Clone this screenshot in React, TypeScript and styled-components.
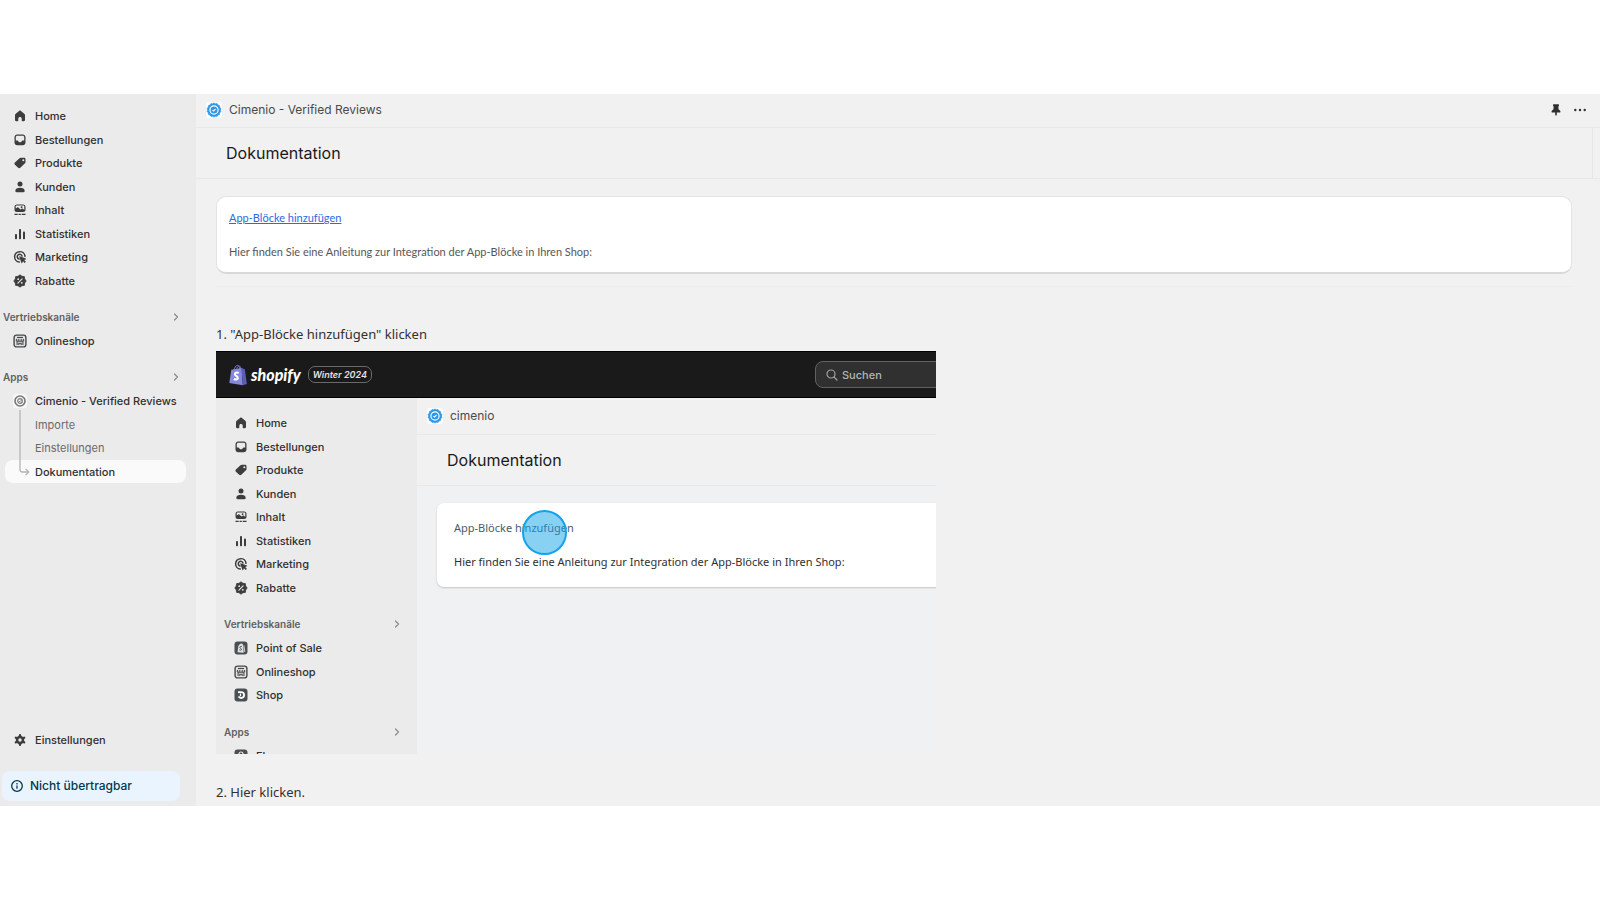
import React from 'react';
import styled, { createGlobalStyle, css } from 'styled-components';

const ui = `Inter, 'Liberation Sans', sans-serif`;
const prose = `'Noto Sans', 'Open Sans', sans-serif`;

const GlobalStyle = createGlobalStyle`
  *, *::before, *::after { box-sizing: border-box; }
  body { margin: 0; background: #ffffff; font-family: ${ui}; color: #303030; }
  h1, h2, h3, p, ul, ol { margin: 0; padding: 0; font-weight: 400; }
  ul, ol { list-style: none; }
  svg { display: block; flex: none; }
`;

/* ---------- icons ---------- */

type IconName =
  | 'home' | 'orders' | 'products' | 'customers' | 'content' | 'analytics'
  | 'marketing' | 'discounts' | 'store' | 'pos' | 'shop' | 'flow' | 'settings' | 'seal';

const scallop = (cx: number, cy: number, r1: number, r2: number, n: number) =>
  Array.from({ length: n * 2 }, (_, i) => {
    const a = (i * Math.PI) / n;
    const r = i % 2 ? r2 : r1;
    return `${(cx + r * Math.sin(a)).toFixed(2)},${(cy - r * Math.cos(a)).toFixed(2)}`;
  }).join(' ');

const glyphs: Record<IconName, React.ReactNode> = {
  home: (
    <path d="M6.1 1.9 2.7 4.7C2.2 5.1 2 5.6 2 6.2v4.9c0 .7.5 1.2 1.2 1.2h1.4c.4 0 .7-.3.7-.7V9.7c0-.9.8-1.6 1.7-1.6s1.7.7 1.7 1.6v1.9c0 .4.3.7.7.7h1.4c.7 0 1.2-.5 1.2-1.2V6.2c0-.6-.2-1.1-.7-1.5L7.9 1.9c-.5-.4-1.3-.4-1.8 0z" />
  ),
  orders: (
    <path fillRule="evenodd" d="M4.2 1.6h5.6c1.5 0 2.7 1.2 2.7 2.7v5.2c0 1.5-1.2 2.7-2.7 2.7H4.2c-1.5 0-2.7-1.2-2.7-2.7V4.3c0-1.5 1.2-2.7 2.7-2.7zM4.3 2.8c-.9 0-1.5.6-1.5 1.5v3.3h1.5c.5 0 .8.2 1 .6.3.7.8 1 1.7 1s1.4-.3 1.7-1c.2-.4.5-.6 1-.6h1.5V4.3c0-.9-.6-1.5-1.5-1.5z" />
  ),
  products: (
    <path fillRule="evenodd" d="M8 1.8h3.1c.8 0 1.4.6 1.4 1.4v2.7c0 .7-.3 1.3-.8 1.7l-4.4 4.1c-.6.6-1.500.6-2.100 0L1.900 8.700c-.6-.6-.6-1.500 0-2.100L6.200 2.500c.5-.5 1.100-.7 1.800-.7zM10.300 3.200a1 1 0 1 0 0 2 1 1 0 0 0 0-2z" />
  ),
  customers: (
    <>
      <circle cx="7" cy="3.900" r="2.500" />
      <path d="M2.300 11c0-2 2-3.200 4.700-3.200s4.700 1.200 4.700 3.200c0 .7-.5 1.200-1.200 1.200h-7c-.7 0-1.200-.5-1.200-1.200z" />
    </>
  ),
  content: (
    <>
      <path fillRule="evenodd" d="M3.800 1.500h6.400c1.300 0 2.300 1 2.300 2.300v3c0 1.300-1 2.300-2.300 2.300H3.800c-1.300 0-2.300-1-2.300-2.300v-3c0-1.300 1-2.300 2.300-2.300zM3.900 2.600c-.7 0-1.200.5-1.200 1.200v1.600l1.500-.9c.4-.2.800-.2 1.100.1L7.500 6.400l1.100-.7c.4-.2.800-.2 1.100 0l1.600 1V3.800c0-.7-.5-1.200-1.200-1.200zM8.600 3.300a.9.9 0 1 0 0 1.800.9.9 0 0 0 0-1.800z" />
      <path d="M1.500 10.800h3.200v1.200H1.500zM5.600 10.800h2.200v1.200H5.600zM8.700 10.800h3.800v1.200H8.700z" />
    </>
  ),
  analytics: (
    <>
      <rect x="2" y="7" width="2" height="5.200" rx=".8" />
      <rect x="6" y="2" width="2" height="10.200" rx=".8" />
      <rect x="10" y="4.500" width="2" height="7.700" rx=".8" />
    </>
  ),
  marketing: (
    <>
      <g fill="none" stroke="currentColor" strokeWidth="1.500" strokeLinecap="round">
        <path d="M12 6.300A5.200 5.200 0 1 0 6.300 12" />
        <path d="M9 6.100A2.400 2.400 0 1 0 6 9" />
      </g>
      <path d="m6.600 6.300 6.300 2.100c.4.1.4.6 0 .8l-1.700.8 1.700 1.700-1.200 1.200L10 11.200l-.8 1.700c-.2.400-.7.400-.8 0L6.300 6.700c-.1-.3.100-.5.300-.4z" />
    </>
  ),
  discounts: (
    <>
      <polygon points={scallop(7, 7, 6.2, 5.1, 8)} stroke="currentColor" strokeWidth=".8" strokeLinejoin="round" />
      <path d="M4.900 9.100 9.100 4.900" stroke="#ebebeb" strokeWidth="1.100" strokeLinecap="round" />
      <circle cx="5.200" cy="5.200" r=".9" fill="#ebebeb" />
      <circle cx="8.800" cy="8.800" r=".9" fill="#ebebeb" />
    </>
  ),
  store: (
    <>
      <rect x="1.100" y="1.100" width="11.800" height="11.800" rx="2.400" fill="#e3e3e3" stroke="#45484b" strokeWidth="1.400" />
      <path d="M4 3.500h6" stroke="#45484b" strokeWidth="1.200" />
      <path d="M3.900 4.900 3.200 6.300c0 .5.300.8.900.8v3.800M10.100 4.900l.7 1.400c0 .5-.3.800-.9.800v3.800M5.800 11V9.200h2.400V11M5.800 5v1.700M8.200 5v1.700M4.100 7.200h5.800" fill="none" stroke="#45484b" strokeWidth="1.100" />
    </>
  ),
  pos: (
    <>
      <rect x=".5" y=".5" width="13" height="13" rx="3" fill="#4a4f52" />
      <path d="M3.500 11.200 4.300 5c1.200-1.300 1.700-2.500 3.200-2.500S9 4 9.200 5l.5 6.800z" fill="#dfe0e1" />
      <path d="M9.900 4.500 10.800 11" stroke="#dfe0e1" strokeWidth=".9" />
      <path d="M7.800 5.600c-1-.5-2 0-2 .8 0 1 1.700 1 1.700 2 0 .8-1.100 1-2.100.4" fill="none" stroke="#4a4f52" strokeWidth="1" />
    </>
  ),
  shop: (
    <>
      <rect x=".5" y=".5" width="13" height="13" rx="3" fill="#4a4f52" />
      <path d="M4 4.200h3.200a2.900 2.900 0 0 1 0 5.800c-1.200 0-2.100-.5-2.700-1.400" fill="none" stroke="#ffffff" strokeWidth="1.800" />
      <path d="M6.500 5.500v2.700" stroke="#ffffff" strokeWidth="1.300" />
    </>
  ),
  flow: (
    <>
      <rect x=".5" y=".5" width="13" height="13" rx="3" fill="#4a4f52" />
      <circle cx="7" cy="5" r="2" fill="none" stroke="#ebebeb" strokeWidth="1.200" />
    </>
  ),
  settings: (
    <>
      <g stroke="currentColor" strokeWidth="2.400" strokeLinecap="round">
        <path d="M7 2.300v9.400M2.900 4.700l8.200 4.600M2.900 9.300l8.200-4.600" />
      </g>
      <circle cx="7" cy="7" r="4.200" />
      <circle cx="7" cy="7" r="1.700" fill="#ebebeb" />
    </>
  ),
  seal: (
    <>
      <rect width="14" height="14" rx="3" fill="#f7f7f7" />
      <circle cx="7" cy="7" r="5" fill="none" stroke="#767676" strokeWidth="1.600" />
      <circle cx="7" cy="7" r="2.300" fill="none" stroke="#767676" strokeWidth="1.200" />
      <path d="m6 7.100.8.700L8.200 6.300" fill="none" stroke="#767676" strokeWidth=".9" />
    </>
  ),
};

const IconSvg = styled.svg`
  color: #3d3d3d;
`;

const Icon = ({ name }: { name: IconName }) => (
  <IconSvg width="14" height="14" viewBox="0 0 14 14" fill="currentColor" aria-hidden="true">
    {glyphs[name]}
  </IconSvg>
);

const AppLogo = () => (
  <svg width="16" height="16" viewBox="0 0 16 16" aria-hidden="true">
    <rect width="16" height="16" rx="3" fill="#ffffff" />
    <polygon points={scallop(8, 8, 7.1, 6.400, 14)} fill="#2e96ea" stroke="#2e96ea" strokeWidth=".6" strokeLinejoin="round" />
    <circle cx="8" cy="8" r="4.100" fill="none" stroke="#ffffff" strokeWidth="1.200" />
    <path d="m6.400 8.100 1.100 1 2-2.100" fill="none" stroke="#ffffff" strokeWidth="1.100" />
  </svg>
);

const Chevron = () => (
  <svg width="8" height="8" viewBox="0 0 8 8" fill="none" stroke="#8a8a8a" strokeWidth="1.200" strokeLinecap="round" strokeLinejoin="round" aria-hidden="true">
    <path d="m2.500 1 3 3-3 3" />
  </svg>
);

/* ---------- navigation ---------- */

const NavList = styled.ul`
  position: relative;
  margin: 0 10px 0 5px;
  &:first-child { margin-bottom: 1px; }
`;

const NavItem = styled.li`
  height: 24px;
  &:nth-of-type(even) { height: 23px; }
`;

const NavLink = styled.a<{ $sub?: boolean; $active?: boolean }>`
  display: flex;
  align-items: center;
  gap: 8px;
  height: 100%;
  padding-left: ${(p) => (p.$sub ? 30 : 8)}px;
  border-radius: 8px;
  font-size: 11px;
  font-weight: 500;
  line-height: 16px;
  color: #303030;
  text-decoration: none;
  white-space: nowrap;
  ${(p) => p.$sub && !p.$active && css`color: #6a6a6a; font-weight: 400;`}
  ${(p) => p.$active && css`background: #fafafa;`}
`;

const TreeLine = styled.svg`
  position: absolute;
  left: 14px;
  top: 21px;
`;

const SectionButton = styled.button`
  display: flex;
  align-items: center;
  justify-content: space-between;
  width: 100%;
  height: 24px;
  margin-top: 12px;
  padding: 0 16px 0 3px;
  border: 0;
  background: none;
  font: 600 10px/16px ${ui};
  color: #616161;
`;

const Section = ({ title }: { title: string }) => (
  <SectionButton type="button">
    {title}
    <Chevron />
  </SectionButton>
);

type Entry = { icon: IconName; label: string };

const mainEntries: Entry[] = [
  { icon: 'home', label: 'Home' },
  { icon: 'orders', label: 'Bestellungen' },
  { icon: 'products', label: 'Produkte' },
  { icon: 'customers', label: 'Kunden' },
  { icon: 'content', label: 'Inhalt' },
  { icon: 'analytics', label: 'Statistiken' },
  { icon: 'marketing', label: 'Marketing' },
  { icon: 'discounts', label: 'Rabatte' },
];

const Entries = ({ items }: { items: Entry[] }) => (
  <NavList>
    {items.map((e) => (
      <NavItem key={e.label}>
        <NavLink href="#">
          <Icon name={e.icon} />
          {e.label}
        </NavLink>
      </NavItem>
    ))}
  </NavList>
);

/* ---------- admin frame ---------- */

const Page = styled.div`
  display: flex;
  flex-direction: column;
  height: 100vh;
  padding: 94px 0;
`;

const Admin = styled.div`
  display: flex;
  flex: 1;
  min-height: 0;
  overflow: hidden;
  background: #f1f1f1;
`;

const Sidebar = styled.nav`
  display: flex;
  flex-direction: column;
  flex: none;
  width: 196px;
  padding: 10px 0 5px;
  background: #ebebeb;
`;

const SidebarFooter = styled.div`
  margin-top: auto;
`;

const Notice = styled.button`
  display: flex;
  align-items: center;
  gap: 6px;
  width: 178px;
  height: 30px;
  margin: 19px 0 0 2px;
  padding: 0 8px;
  border: 0;
  border-radius: 8px;
  background: #eaf4ff;
  font: 500 12px/16px ${ui};
  color: #00394f;
`;

const Main = styled.main`
  flex: 1;
  min-width: 0;
`;

const AppBar = styled.header<{ $tall?: boolean }>`
  display: flex;
  align-items: center;
  gap: 7px;
  height: ${(p) => (p.$tall ? 37 : 34)}px;
  padding: 0 14px ${(p) => (p.$tall ? 0 : 2)}px 10px;
  border-bottom: 1px solid #e9e9e9;
  font-size: 12px;
  line-height: 16px;
  color: #4a4a4a;
`;

const BarActions = styled.div`
  display: flex;
  gap: 12px;
  margin-left: auto;
`;

const IconButton = styled.button`
  display: flex;
  padding: 0;
  border: 0;
  background: none;
  color: #303030;
`;

const TitleBar = styled.div`
  padding-right: 7px;
  border-bottom: 1px solid #e9e9e9;
`;

const Title = styled.h1<{ $edge?: boolean }>`
  height: 50px;
  padding-left: 30px;
  font-size: 16px;
  line-height: 50px;
  color: #1a1a1a;
  ${(p) => p.$edge && css`border-right: 1px solid #e6e6e6;`}
`;

const Content = styled.div`
  padding: 17px 28px 0 20px;
`;

const Card = styled.section`
  display: flex;
  flex-direction: column;
  align-items: flex-start;
  gap: 18px;
  height: 78px;
  padding: 13px 12px;
  border: 1px solid #e3e3e3;
  border-bottom: 2px solid #d8d8d8;
  border-radius: 10px;
  background: #ffffff;
  font: 11px/16px Lato, sans-serif;
  color: #575757;
`;

const DocLink = styled.a`
  color: #2b6ae0;
  text-decoration: underline;
`;

const Divider = styled.div`
  height: 1px;
  margin-top: 12px;
  background: #ededed;
`;

const Steps = styled.ol`
  padding-top: 36px;
`;

const Step = styled.li`
  margin-bottom: 27px;
`;

const StepTitle = styled.h2`
  margin-bottom: 6px;
  font: 13px/22px ${prose};
  color: #303030;
`;

/* ---------- screenshot shown in step one ---------- */

const Shot = styled.figure`
  max-width: 720px;
  height: 403px;
  margin: 0;
  overflow: hidden;
`;

const TopBar = styled.div`
  display: flex;
  align-items: center;
  height: 47px;
  padding-left: 13px;
  border: solid #000000;
  border-width: 1px 0;
  background: #1a1a1a;
`;

const Wordmark = styled.span`
  margin-left: 4px;
  font: italic 900 16px/22px Lato, sans-serif;
  color: #ffffff;
`;

const Edition = styled.span`
  margin-left: 7px;
  padding: 0 4px;
  border: 1px solid #6a6a6a;
  border-radius: 7px;
  font: italic 600 9px/15px ${ui};
  color: #e3e3e3;
`;

const Search = styled.label`
  display: flex;
  align-items: center;
  gap: 4px;
  width: 141px;
  height: 27px;
  margin: 0 -20px 0 auto;
  padding-left: 10px;
  border: 1px solid #616161;
  border-radius: 8px;
  background: #303030;
  color: #a0a0a0;
`;

const SearchInput = styled.input`
  width: 80px;
  padding: 0;
  border: 0;
  outline: 0;
  background: none;
  font: 500 11px/16px ${ui};
  color: #b5b5b5;
  &::placeholder { color: #b5b5b5; opacity: 1; }
`;

const ShotBody = styled.div`
  display: flex;
  height: 356px;
  overflow: hidden;
`;

const ShotNav = styled.div`
  flex: none;
  width: 201px;
  padding: 13px 0 0;
  background: #ebebeb;
  ${NavList} { margin-left: 10px; }
  ${NavLink} { padding-left: 8px; }
  ${SectionButton} { margin-top: 13px; padding-left: 8px; }
`;

const ShotMain = styled.div`
  flex: 1;
  min-width: 0;
  background: #f1f1f1;
`;

const ShotContent = styled.div`
  height: 270px;
  padding: 17px 0 0 20px;
  background: #f0f1f3;
`;

const ShotCard = styled.div`
  position: relative;
  display: flex;
  flex-direction: column;
  align-items: flex-start;
  gap: 18px;
  height: 84px;
  margin-right: -20px;
  padding: 17px;
  border-radius: 7px;
  background: #ffffff;
  box-shadow: 0 1px 2px rgba(0, 0, 0, 0.18);
  font: 11px/16px ${prose};
  color: #303030;
`;

const ShotLink = styled.a`
  color: #4a5a6c;
  text-decoration: none;
`;

const ClickMark = styled.span`
  position: absolute;
  left: 85px;
  top: 7px;
  width: 45px;
  height: 45px;
  border: 2px solid #12a3ec;
  border-radius: 50%;
  background: rgba(18, 163, 232, 0.5);
`;

const ShopBag = () => (
  <svg width="18" height="22" viewBox="0 0 18 22" aria-hidden="true">
    <path d="M5 7c.3-3 1.700-5.700 3.600-5.700 1.500 0 2 1.800 2.200 4.200M7.500 6C8 3.500 9 2 10 2c1.200 0 1.700 1.200 1.900 3" fill="none" stroke="#7478c8" strokeWidth="1" />
    <path d="M2.300 5.800 12.600 4l1.200 17.200L.3 18.900z" fill="#8588dc" />
    <path d="m12.600 4 3.200 1.200L17.900 20l-4.100 1.200z" fill="#5a5eb5" />
    <path d="M9.700 9c-2.200-1.100-3.900-.2-3.800 1.200.1 1.700 3 1.900 2.900 3.900-.1 1.500-2.200 1.800-3.900.7" fill="none" stroke="#ffffff" strokeWidth="2.100" />
  </svg>
);

export default function App() {
  return (
    <>
      <GlobalStyle />
      <Page>
        <Admin>
          <Sidebar>
            <Entries items={mainEntries} />
            <Section title="Vertriebskanäle" />
            <Entries items={[{ icon: 'store', label: 'Onlineshop' }]} />
            <Section title="Apps" />
            <NavList>
              <NavItem>
                <NavLink href="#">
                  <Icon name="seal" />
                  Cimenio - Verified Reviews
                </NavLink>
              </NavItem>
              <NavItem><NavLink href="#" $sub>Importe</NavLink></NavItem>
              <NavItem><NavLink href="#" $sub>Einstellungen</NavLink></NavItem>
              <NavItem><NavLink href="#" $sub $active aria-current="page">Dokumentation</NavLink></NavItem>
              <TreeLine width="12" height="68" viewBox="0 0 12 68" fill="none" stroke="#b5b5b5" strokeWidth="1.300" strokeLinecap="round" aria-hidden="true">
                <path d="M1 0v59.500c0 1.500 1 2.500 2.500 2.500H9.500M7 59.300 9.700 62 7 64.700" />
              </TreeLine>
            </NavList>
            <SidebarFooter>
              <Entries items={[{ icon: 'settings', label: 'Einstellungen' }]} />
              <Notice type="button">
                <svg width="14" height="14" viewBox="0 0 14 14" fill="none" stroke="currentColor" strokeWidth="1.300" aria-hidden="true">
                  <circle cx="7" cy="7" r="5.300" />
                  <path d="M7 6.500v3.200M7 4.100v1.300" />
                </svg>
                Nicht übertragbar
              </Notice>
            </SidebarFooter>
          </Sidebar>

          <Main>
            <AppBar>
              <AppLogo />
              Cimenio - Verified Reviews
              <BarActions>
                <IconButton type="button" aria-label="Anheften">
                  <svg width="12" height="12" viewBox="0 0 12 12" fill="currentColor" aria-hidden="true">
                    <path d="M3.700.3h4.600c.5 0 .7.300.7.700v.8c0 .4-.3.600-.7.700l.3 2.900c1.200.5 1.900 1.300 1.900 2.400 0 .4-.2.600-.6.600H6.800v2.300L6 12l-.8-1.300V8.400H2.100c-.4 0-.6-.2-.6-.6 0-1.100.7-1.900 1.900-2.400l.3-2.900C3.300 2.400 3 2.200 3 1.800V1c0-.4.200-.7.700-.7z" />
                  </svg>
                </IconButton>
                <IconButton type="button" aria-label="Mehr">
                  <svg width="12" height="12" viewBox="0 0 12 12" fill="currentColor" aria-hidden="true">
                    <circle cx="1.300" cy="6" r="1.200" />
                    <circle cx="6" cy="6" r="1.200" />
                    <circle cx="10.700" cy="6" r="1.200" />
                  </svg>
                </IconButton>
              </BarActions>
            </AppBar>
            <TitleBar>
              <Title $edge>Dokumentation</Title>
            </TitleBar>
            <Content>
              <Card>
                <DocLink href="#">App-Blöcke hinzufügen</DocLink>
                <p>Hier finden Sie eine Anleitung zur Integration der App-Blöcke in Ihren Shop:</p>
              </Card>
              <Divider />
              <Steps>
                <Step>
                  <StepTitle>1. "App-Blöcke hinzufügen" klicken</StepTitle>
                  <Shot>
                    <TopBar>
                      <ShopBag />
                      <Wordmark>shopify</Wordmark>
                      <Edition>Winter 2024</Edition>
                      <Search>
                        <svg width="12" height="12" viewBox="0 0 12 12" fill="none" stroke="currentColor" strokeWidth="1.200" strokeLinecap="round" aria-hidden="true">
                          <circle cx="5" cy="5" r="4" />
                          <path d="m8 8 3 3" />
                        </svg>
                        <SearchInput type="text" placeholder="Suchen" aria-label="Suchen" />
                      </Search>
                    </TopBar>
                    <ShotBody>
                      <ShotNav>
                        <Entries items={mainEntries} />
                        <Section title="Vertriebskanäle" />
                        <Entries
                          items={[
                            { icon: 'pos', label: 'Point of Sale' },
                            { icon: 'store', label: 'Onlineshop' },
                            { icon: 'shop', label: 'Shop' },
                          ]}
                        />
                        <Section title="Apps" />
                        <Entries items={[{ icon: 'flow', label: 'Flow' }]} />
                      </ShotNav>
                      <ShotMain>
                        <AppBar $tall>
                          <AppLogo />
                          cimenio
                        </AppBar>
                        <TitleBar>
                          <Title as="h3">Dokumentation</Title>
                        </TitleBar>
                        <ShotContent>
                          <ShotCard>
                            <ShotLink href="#">App-Blöcke hinzufügen</ShotLink>
                            <p>Hier finden Sie eine Anleitung zur Integration der App-Blöcke in Ihren Shop:</p>
                            <ClickMark />
                          </ShotCard>
                        </ShotContent>
                      </ShotMain>
                    </ShotBody>
                  </Shot>
                </Step>
                <Step>
                  <StepTitle>2. Hier klicken.</StepTitle>
                </Step>
              </Steps>
            </Content>
          </Main>
        </Admin>
      </Page>
    </>
  );
}
